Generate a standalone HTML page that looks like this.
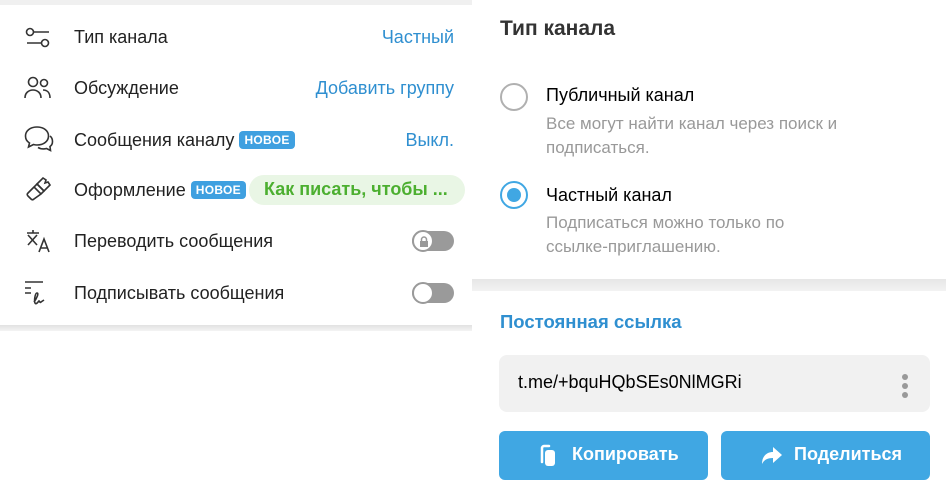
<!DOCTYPE html>
<html><head><meta charset="utf-8"><style>
*{margin:0;padding:0;box-sizing:border-box}
body{width:946px;height:501px;background:#fff;font-family:"Liberation Sans","DejaVu Sans",sans-serif;position:relative;overflow:hidden;color:#000}
.a{position:absolute;white-space:nowrap}
.row{font-size:18px;color:#222}
.val{color:#2f8fd0;font-size:18px}
.badge{display:inline-block;background:#3fa0e0;color:#fff;font-size:12px;font-weight:bold;padding:2px 5px;border-radius:4px;vertical-align:2px;letter-spacing:.3px}
.tog{position:absolute;width:42px;height:20px;border-radius:10px;background:#9a9a9a}
.tog i{position:absolute;left:0;top:-1px;width:22px;height:22px;border-radius:50%;background:#fff;border:2.5px solid #9a9a9a}
svg{position:absolute}
.g{color:#999;font-size:17px;line-height:24px}
.btn{position:absolute;top:431px;height:49px;background:#40a7e3;border-radius:6px;color:#fff;font-size:18px;font-weight:bold}
</style></head><body>
<div class="a" style="left:0;top:0;width:472px;height:5px;background:#f0f0f0"></div>
<div class="a" style="left:0;top:325px;width:472px;height:6px;background:linear-gradient(#e2e2e2,#f4f4f4)"></div>

<svg style="left:24px;top:26px" width="28" height="24" viewBox="0 0 28 24" fill="none" stroke="#333" stroke-width="1.6"><circle cx="6" cy="6" r="3.5"/><path d="M9.5 6H25M3 17h14.5"/><circle cx="21" cy="17" r="3.5"/></svg>
<div class="a row" style="left:74px;top:27px">Тип канала</div>
<div class="a val" style="right:492px;top:27px">Частный</div>

<svg style="left:24px;top:76px" width="30" height="24" viewBox="0 0 30 24" fill="none" stroke="#333" stroke-width="1.6"><circle cx="9" cy="6" r="4.5"/><path d="M1 22c0-5 3.5-8 8-8s8 3 8 8"/><circle cx="20" cy="7" r="3.5"/><path d="M19 14c4 0 7 2.5 7 8"/></svg>
<div class="a row" style="left:74px;top:78px">Обсуждение</div>
<div class="a val" style="right:492px;top:78px">Добавить группу</div>

<svg style="left:24px;top:125px" width="30" height="30" viewBox="0 0 30 30" fill="none" stroke="#333" stroke-width="1.6"><path d="M13 2C6 2 1.5 6 1.5 11c0 3 1.5 5.5 4 7l-1 4 5-2.5c1 .3 2.3.5 3.5.5 7 0 11.5-4 11.5-9S20 2 13 2z"/><path d="M26 11c2 1.5 2.5 3.5 2.5 5.5 0 2-1 4-2.5 5l.5 4-4-2c-1 .3-2 .4-3 .4-2 0-4-.5-5.5-1.5"/></svg>
<div class="a row" style="left:74px;top:130px">Сообщения каналу <span class="badge">НОВОЕ</span></div>
<div class="a val" style="right:492px;top:130px">Выкл.</div>

<svg style="left:25px;top:176px" width="28" height="28" viewBox="0 0 28 28" fill="none" stroke="#333" stroke-width="1.6"><path d="M12 8l6-6 3 2-1 3 3-1 2 3-6 6z"/><path d="M12 8l7 7-3 3-7-7zM9 11l-6 6c-1 1-1 2 0 3l1 1 2 2c1 1 2 1 3 0l7-5"/></svg>
<div class="a row" style="left:74px;top:180px">Оформление <span class="badge">НОВОЕ</span></div>
<div class="a" style="left:249px;top:175px;width:216px;height:30px;background:#e9f6e5;border-radius:15px;color:#4caf30;font-size:18px;font-weight:bold;padding:4px 0 0 15px">Как писать, чтобы ...</div>

<svg style="left:25px;top:229px" width="28" height="24" viewBox="0 0 28 24" fill="none" stroke="#333" stroke-width="1.6"><path d="M2 4h12M8 1v3M3 6l9 10M12 6L3 16M14 23l5-13 5 13M16 19h6"/></svg>
<div class="a row" style="left:74px;top:231px">Переводить сообщения</div>
<div class="tog" style="left:412px;top:231px"><i></i></div>
<svg style="left:418px;top:236px" width="12" height="12" viewBox="0 0 12 12"><rect x="2" y="5" width="8" height="6" fill="#999"/><path d="M3.5 5V3.5a2.5 2.5 0 015 0V5" stroke="#999" stroke-width="1.5" fill="none"/></svg>

<svg style="left:24px;top:280px" width="30" height="26" viewBox="0 0 30 26" fill="none" stroke="#333" stroke-width="1.6"><path d="M1 2h18M1 8h6M1 13h6"/><path d="M10 22c3-4 5-9 3-9s-3 8-2 10 3-1 4-2c1 1 1 2 2 1l3-2"/></svg>
<div class="a row" style="left:74px;top:283px">Подписывать сообщения</div>
<div class="tog" style="left:412px;top:283px"><i></i></div>

<div class="a" style="left:500px;top:17px;font-size:21px;font-weight:bold;color:#333">Тип канала</div>
<div class="a" style="left:500px;top:83px;width:28px;height:28px;border-radius:50%;border:2.5px solid #b0b0b0"></div>
<div class="a" style="left:546px;top:85px;font-size:18px">Публичный канал</div>
<div class="a g" style="left:546px;top:112px">Все могут найти канал через поиск и<br>подписаться.</div>
<div class="a" style="left:500px;top:181px;width:28px;height:28px;border-radius:50%;border:2.5px solid #40a7e3"></div>
<div class="a" style="left:507px;top:188px;width:14px;height:14px;border-radius:50%;background:#40a7e3"></div>
<div class="a" style="left:546px;top:185px;font-size:18px">Частный канал</div>
<div class="a g" style="left:546px;top:211px">Подписаться можно только по<br>ссылке-приглашению.</div>
<div class="a" style="left:472px;top:279px;width:474px;height:12px;background:linear-gradient(#e6e6e6,#f2f2f2)"></div>

<div class="a" style="left:500px;top:311px;font-size:18.5px;font-weight:bold;color:#2f8fd0">Постоянная ссылка</div>
<div class="a" style="left:499px;top:355px;width:431px;height:57px;background:#f1f1f1;border-radius:8px"></div>
<div class="a" style="left:518px;top:372px;font-size:18px">t.me/+bquHQbSEs0NlMGRi</div>
<div class="a" style="left:902px;top:374px;width:6px;height:6px;border-radius:50%;background:#999;box-shadow:0 9px 0 #999,0 18px 0 #999"></div>

<div class="btn" style="left:499px;width:209px"></div>
<svg style="left:538px;top:444px" width="20" height="24" viewBox="0 0 20 24"><path d="M4 18V4c0-1 1-2 2-2h5" stroke="#fff" stroke-width="2.5" fill="none" stroke-linecap="round"/><rect x="7" y="6" width="10" height="16" rx="3" fill="#fff"/></svg>
<div class="a" style="left:572px;top:444px;color:#fff;font-size:18px;font-weight:bold">Копировать</div>
<div class="btn" style="left:721px;width:209px"></div>
<svg style="left:761px;top:446px" width="22" height="20" viewBox="0 0 22 20"><path d="M12 1l9 8-9 8v-5C6 12 3 14 1 18 1 11 5 6 12 6z" fill="#fff"/></svg>
<div class="a" style="left:794px;top:444px;color:#fff;font-size:18px;font-weight:bold">Поделиться</div>
</body></html>
